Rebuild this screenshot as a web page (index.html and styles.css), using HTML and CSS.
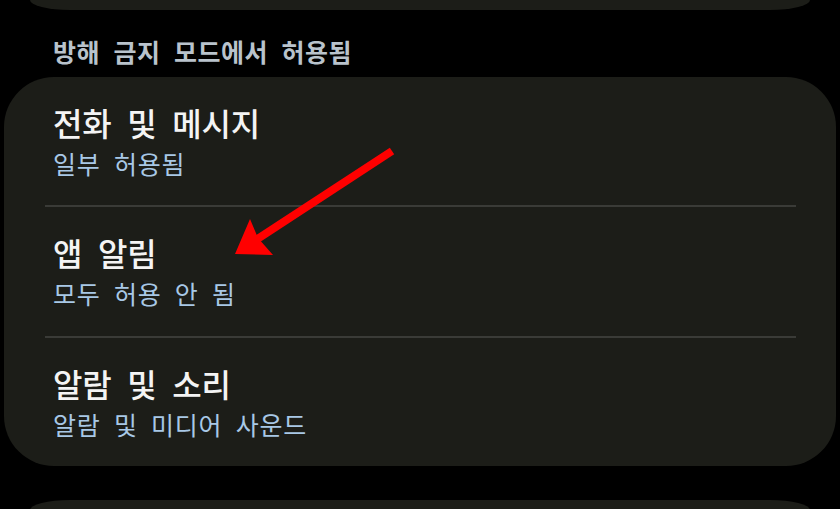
FILE: index.html
```html
<!DOCTYPE html>
<html lang="ko">
<head>
    <meta charset="UTF-8">
    <meta name="viewport" content="width=device-width, initial-scale=1.0">
    <title>방해 금지 모드</title>
    <link rel="stylesheet" href="styles.css">
</head>
<body>
    <div class="screen">
        <div class="card card-top"></div>

        <h2 class="section-title">방해 금지 모드에서 허용됨</h2>

        <div class="card card-main">
            <div class="row">
                <div class="row-title">전화 및 메시지</div>
                <div class="row-sub">일부 허용됨</div>
            </div>
            <div class="row">
                <div class="row-title">앱 알림</div>
                <div class="row-sub">모두 허용 안 됨</div>
            </div>
            <div class="row">
                <div class="row-title">알람 및 소리</div>
                <div class="row-sub">알람 및 미디어 사운드</div>
            </div>
        </div>

        <div class="card card-bottom"></div>

        <!-- annotation arrow drawn over the list -->
        <svg class="arrow" width="840" height="509" viewBox="0 0 840 509">
            <line x1="392" y1="151" x2="256" y2="240" stroke="#ff0000" stroke-width="8"/>
            <polygon points="235,254 250,219 258,238 273,255" fill="#ff0000"/>
        </svg>
    </div>
</body>
</html>
```

FILE: styles.css
```css
body {
    margin: 0;
    padding: 0;
    background-color: #000;
    font-family: "Noto Sans CJK KR", "Noto Sans", sans-serif;
    overflow: hidden;
}
.screen {
    position: relative;
    width: 840px;
    height: 509px;
    display: flex;
    flex-direction: column;
}
.screen > * {
    flex-shrink: 0;
}
.card {
    background-color: #1c1d18;
}
.card-top {
    height: 10px;
    margin: 0 30px;
    border-radius: 0 0 40px 40px / 0 0 10px 10px;
}
.section-title {
    margin: 0;
    padding: 26px 0 0 53px;
    height: 41px;
    font-size: 25px;
    font-weight: 700;
    line-height: 30px;
    color: #b9c3cc;
    letter-spacing: 0.5px;
    word-spacing: 6px;
}
.card-main {
    margin: 0 4px;
    border-radius: 50px;
    height: 389px;
    display: flex;
    flex-direction: column;
}
.row {
    height: 129px;
    padding: 0 40px 0 49px;
    display: flex;
    flex-direction: column;
    justify-content: center;
}
.row + .row {
    border-top: 2px solid #3a3b37;
    margin-left: 41px;
    padding-left: 8px;
    margin-right: 40px;
    padding-right: 0;
}
.row-title {
    font-size: 32px;
    font-weight: 500;
    line-height: 36px;
    color: #f4f4f4;
    letter-spacing: -0.2px;
    word-spacing: 7px;
}
.row-sub {
    margin-top: 8px;
    font-size: 25px;
    line-height: 30px;
    color: #a8c8e6;
    letter-spacing: 0.8px;
    word-spacing: 5.5px;
}
.card-bottom {
    height: 20px;
    margin: 34px 30px 0;
    border-radius: 40px 40px 0 0 / 10px 10px 0 0;
}
.arrow {
    position: absolute;
    left: 0;
    top: 0;
}
```
